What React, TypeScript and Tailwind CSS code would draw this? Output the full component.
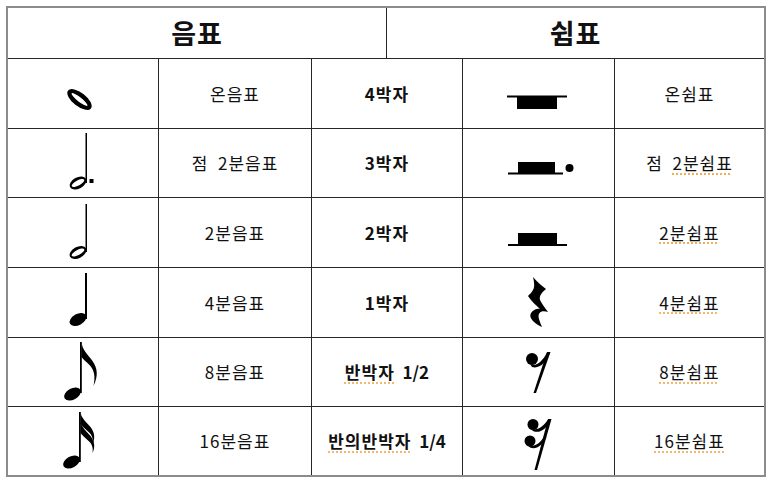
import type { ReactNode } from "react";

const colStart = [8, 159, 312, 463, 615];
const colW = [151, 153, 151, 152, 149];
const rowStart = [59, 129, 198, 268, 338, 407];
const rowH = [70, 69, 70, 70, 69, 68];

function cellBorder(c: number, r: number) {
  const right = c < 4 ? "border-r" : "";
  const bottom = r < 5 ? "border-b" : "";
  return `flex items-center justify-center border-[#262626] ${right} ${bottom}`;
}

function Drawing({ c, r, children }: { c: number; r: number; children: ReactNode }) {
  const w = colW[c] - (c < 4 ? 1 : 0);
  const h = rowH[r] - (r < 5 ? 1 : 0);
  return (
    <svg viewBox={`${colStart[c]} ${rowStart[r]} ${w} ${h}`} className="block h-full w-full" fill="#000">
      {children}
    </svg>
  );
}

const sp = "underline decoration-dotted decoration-[#f0a040] underline-offset-[3px]";

function head(cx: number, cy: number, hollow: boolean) {
  const outer = `M${cx - 9},${cy} a9,5.6 0 1,0 18,0 a9,5.6 0 1,0 -18,0 Z`;
  const inner = `M${cx - 7},${cy} a7,2.6 0 1,0 14,0 a7,2.6 0 1,0 -14,0 Z`;
  return (
    <g transform={`rotate(-28 ${cx} ${cy})`}>
      <path fillRule="evenodd" d={hollow ? outer + inner : outer} />
    </g>
  );
}

function flag(x: number, y: number) {
  return (
    <path
      d={`M${x},${y} C${x + 0.5},${y + 8} ${x + 7},${y + 13} ${x + 11},${y + 19} C${x + 16},${y + 26} ${x + 17},${y + 34} ${x + 12},${y + 44} C${x + 14},${y + 35} ${x + 13},${y + 28} ${x + 8},${y + 23} C${x + 5},${y + 20} ${x + 1.5},${y + 17} ${x},${y + 15} Z`}
    />
  );
}

function flag16(x: number, y: number) {
  return (
    <path
      d={`M${x},${y} C${x + 0.5},${y + 6} ${x + 6},${y + 10} ${x + 10},${y + 15} C${x + 14},${y + 20} ${x + 15},${y + 26} ${x + 12},${y + 32} C${x + 13},${y + 26} ${x + 11},${y + 22} ${x + 7},${y + 19} C${x + 4},${y + 16} ${x + 1.5},${y + 14} ${x},${y + 12} Z`}
    />
  );
}

const notes: ReactNode[] = [
  <g transform="rotate(38 79.5 99.5)">
    <path
      fillRule="evenodd"
      d="M65,99.5 a14.5,6.8 0 1,0 29,0 a14.5,6.8 0 1,0 -29,0 Z M69.5,99.5 a10,2.2 0 1,0 20,0 a10,2.2 0 1,0 -20,0 Z"
    />
  </g>,
  <>
    {head(78, 183, true)}
    <rect x={85.5} y={133} width={1.5} height={50} />
    <rect x={89.5} y={179} width={4} height={4} />
  </>,
  <>
    {head(78, 252.5, true)}
    <rect x={85.5} y={204} width={1.5} height={48} />
  </>,
  <>
    {head(78, 319.5, false)}
    <rect x={85} y={273} width={2} height={46} />
  </>,
  <>
    {head(72.5, 394, false)}
    <rect x={80} y={342} width={1.8} height={51} />
    {flag(81.5, 342)}
  </>,
  <>
    {head(71.5, 462, false)}
    <rect x={79} y={412} width={1.8} height={50} />
    {flag16(80.5, 412)}
    {flag16(80.5, 421)}
  </>,
];

const rests: ReactNode[] = [
  <>
    <rect x={507} y={95.5} width={60} height={2} />
    <rect x={517} y={97} width={40} height={12} />
  </>,
  <>
    <rect x={508} y={172.5} width={55} height={2} />
    <rect x={518} y={162} width={37} height={11} />
    <circle cx={569.5} cy={168} r={4} />
  </>,
  <>
    <rect x={508} y={244} width={59} height={2} />
    <rect x={518} y={233} width={39} height={11} />
  </>,
  <g transform="translate(525 277)">
    <path d="M8,0 C12,5 17,9 21,12 C17,15 14,19 15,23 C17,27 20,31 23,35 C17,33 12,35 14,42 C15,45 16,48 17,50 C10,47 3,41 6,36 C8,33 12,31 15,32 C11,28 6,24 3,19 C7,15 10,12 9,6 C9,3 8,1 8,0 Z" />
  </g>,
  <>
    <circle cx={532} cy={359} r={6} />
    <path d="M530,364 C536,367 542,362 547.5,352 L550,353 C545,363 540,369 532,367 Z" />
    <polygon points="547,352 550.5,352 536,393 533.5,393" />
  </>,
  <>
    <circle cx={533} cy={424.5} r={5.5} />
    <path d="M531,429 C537,431 543,427 548.5,419 L551,420 C546,429 540,434 533,431 Z" />
    <circle cx={530} cy={441} r={5.5} />
    <path d="M528,445.5 C534,447 540,444 544.5,436 L546.5,437 C542,446 536,450 530,447.5 Z" />
    <polygon points="548,419 551.5,419 537,470 534.5,470" />
  </>,
];

const noteNames: ReactNode[] = ["온음표", "점  2분음표", "2분음표", "4분음표", "8분음표", "16분음표"];

const beats: ReactNode[] = [
  "4박자",
  "3박자",
  "2박자",
  "1박자",
  <>
    <span className={sp}>반박자</span>
    <span className="tracking-normal">{"  1/2"}</span>
  </>,
  <>
    <span className={sp}>반의반박자</span>
    <span className="tracking-normal">{"  1/4"}</span>
  </>,
];

const restNames: ReactNode[] = [
  "온쉼표",
  <>
    {"점  "}
    <span className={sp}>2분쉼표</span>
  </>,
  <span className={sp}>2분쉼표</span>,
  <span className={sp}>4분쉼표</span>,
  <span className={sp}>8분쉼표</span>,
  <span className={sp}>16분쉼표</span>,
];

export default function App() {
  return (
    <div className="min-h-screen bg-white pl-[6px] pt-[6px] font-['Noto_Sans_CJK_KR',sans-serif] text-[#111]">
      <div className="w-[760px] border-2 border-[#8c8c8c]">
        <div className="grid h-[51px] grid-cols-[379px_377px] border-b border-[#262626]">
          <div className="flex items-center justify-center border-r border-[#262626] text-[27px] font-bold tracking-[1px]">
            음표
          </div>
          <div className="flex items-center justify-center text-[27px] font-bold tracking-[1px]">쉼표</div>
        </div>
        <div className="grid grid-cols-[151px_153px_151px_152px_149px] grid-rows-[70px_69px_70px_70px_69px_68px] text-[17px] tracking-[1px]">
          {notes.map((n, r) => (
            <div key={r} className="contents">
              <div className={cellBorder(0, r)}>
                <Drawing c={0} r={r}>
                  {n}
                </Drawing>
              </div>
              <div className={cellBorder(1, r) + " whitespace-pre"}>{noteNames[r]}</div>
              <div className={cellBorder(2, r) + " whitespace-pre font-bold"}>{beats[r]}</div>
              <div className={cellBorder(3, r)}>
                <Drawing c={3} r={r}>
                  {rests[r]}
                </Drawing>
              </div>
              <div className={cellBorder(4, r) + " whitespace-pre"}>{restNames[r]}</div>
            </div>
          ))}
        </div>
      </div>
    </div>
  );
}
